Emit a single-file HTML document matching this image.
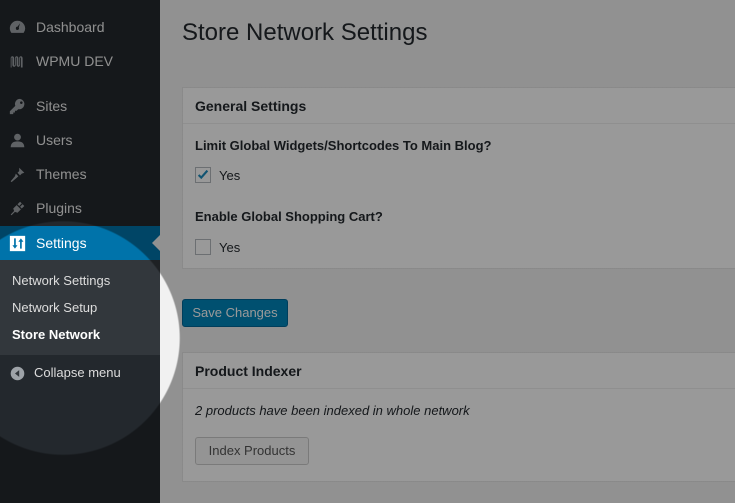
<!DOCTYPE html>
<html><head><style>
*{margin:0;padding:0;box-sizing:border-box}
body{width:735px;height:503px;overflow:hidden;background:#f1f1f1;font-family:"Liberation Sans",sans-serif;position:relative;color:#23282d}
#side{position:absolute;left:0;top:0;width:160px;height:503px;background:#23282d}
.mi{position:absolute;left:0;width:160px;height:34px;color:#eee;font-size:14px;line-height:34px;padding-left:36px}
.ic{position:absolute;left:9px;top:9px;width:17px;height:17px;fill:#9ea3a8}
#set{background:#0073aa;color:#fff}
#sub{position:absolute;left:0;top:260px;width:160px;height:95px;background:#32373c}
.si{position:absolute;left:12px;font-size:13px;color:#ddd}
h1{position:absolute;left:182px;top:19px;font-size:24px;font-weight:normal;color:#23282d}
.box{position:absolute;left:182px;right:-5px;background:#fff;border:1px solid #e5e5e5}
.hd{height:36px;border-bottom:1px solid #eee;font-size:14px;font-weight:bold;line-height:36px;padding-left:12px}
.lb{position:absolute;left:12px;font-size:13px;font-weight:bold;color:#23282d}
.cb{position:absolute;left:12px;width:16px;height:16px;border:1px solid #b4b9be;background:#fff}
.yes{position:absolute;left:36px;font-size:13px}
.btn{position:absolute;left:182px;top:299px;width:106px;height:28px;background:#0085ba;border:1px solid #006799;border-radius:3px;color:#fff;font-size:13px;line-height:26px;text-align:center}
#ov{position:absolute;left:0;top:0;width:735px;height:503px;background:radial-gradient(circle 117px at 63px 338px,rgba(0,0,0,0) 116px,rgba(0,0,0,.4) 117.5px)}
</style></head><body>
<div id="side">
<div class="mi" style="top:10px"><svg class="ic" viewBox="0 0 20 20"><path d="M10 2a9 9 0 0 0-9 9c0 2 .7 3.8 1.8 5.3h14.4A9 9 0 0 0 10 2zm0 11a2 2 0 1 1 .1-4L13 5l-1.5 5a2 2 0 0 1-1.5 3z"/></svg>Dashboard</div>
<div class="mi" style="top:44px"><svg class="ic" viewBox="0 0 20 20"><path d="M2 17V6c0-3 4-3 4 0v8c0 1 1 1 1 0V6c0-3 4-3 4 0v8c0 1 1 1 1 0V6c0-3 4-3 4 0v11h-2V6c0-1-1-1-1 0v8c0 3-4 3-4 0V6c0-1-1-1-1 0v8c0 3-4 3-4 0V6c0-1-1-1-1 0v11z"/></svg>WPMU DEV</div>
<div class="mi" style="top:89px"><svg class="ic" viewBox="0 0 20 20"><path d="M13 1a6 6 0 0 0-5.6 8.2L1 15.6V19h4v-2h2v-2h2l1.8-1.8A6 6 0 1 0 13 1zm1.5 3a1.5 1.5 0 1 1 0 3 1.5 1.5 0 0 1 0-3z"/></svg>Sites</div>
<div class="mi" style="top:123px"><svg class="ic" viewBox="0 0 20 20"><circle cx="10" cy="6" r="4"/><path d="M2 18c0-5 3-7 8-7s8 2 8 7z"/></svg>Users</div>
<div class="mi" style="top:157px"><svg class="ic" viewBox="0 0 20 20"><path d="M12 2l6 6-3 1-2 2-3-3 2-2zM8 9l3 3-2 2-6 5-1-1 5-6z"/></svg>Themes</div>
<div class="mi" style="top:191px"><svg class="ic" viewBox="0 0 20 20"><path d="M13 2l-3 3 2 2 3-3zm3 3l-3 3 2 2 3-3zM9 6l5 5-4 4-3-1-4 4-1-1 4-4-1-3z"/></svg>Plugins</div>
<div class="mi" id="set" style="top:226px"><svg class="ic" viewBox="0 0 20 20" style="fill:#fff"><rect x="1" y="1" width="18" height="18"/><path d="M6 4v8H4l3 4 3-4H8V4zM13 16V8h-2l3-4 3 4h-2v8z" fill="#0073aa"/></svg>Settings</div>
<div style="position:absolute;left:152px;top:235px;border:8px solid transparent;border-right-color:#f1f1f1;border-left:0"></div>
<div id="sub">
<div class="si" style="top:13px">Network Settings</div>
<div class="si" style="top:40px">Network Setup</div>
<div class="si" style="top:67px;color:#fff;font-weight:bold">Store Network</div>
</div>
<div class="mi" style="top:356px;font-size:13px;color:#ddd;padding-left:34px"><svg class="ic" viewBox="0 0 20 20"><circle cx="10" cy="10" r="8"/><path d="M12 6v8L7 10z" fill="#32373c"/></svg>Collapse menu</div>
</div>
<h1>Store Network Settings</h1>
<div class="box" style="top:87px;height:182px">
<div class="hd">General Settings</div>
<div class="lb" style="top:50px">Limit Global Widgets/Shortcodes To Main Blog?</div>
<div class="cb" style="top:79px"><svg viewBox="0 0 16 16" width="14" height="14"><path d="M3 8l3 3 7-8" stroke="#1e8cbe" stroke-width="2.4" fill="none"/></svg></div>
<div class="yes" style="top:80px">Yes</div>
<div class="lb" style="top:121px">Enable Global Shopping Cart?</div>
<div class="cb" style="top:151px"></div>
<div class="yes" style="top:152px">Yes</div>
</div>
<div class="btn">Save Changes</div>
<div class="box" style="top:352px;height:130px">
<div class="hd">Product Indexer</div>
<div style="position:absolute;left:12px;top:50px;font-size:13px;font-style:italic">2 products have been indexed in whole network</div>
<div style="position:absolute;left:12px;top:84px;width:114px;height:28px;border:1px solid #ccc;border-radius:3px;background:#f7f7f7;font-size:13px;line-height:26px;text-align:center;color:#555">Index Products</div>
</div>
<div id="ov"></div>
</body></html>
